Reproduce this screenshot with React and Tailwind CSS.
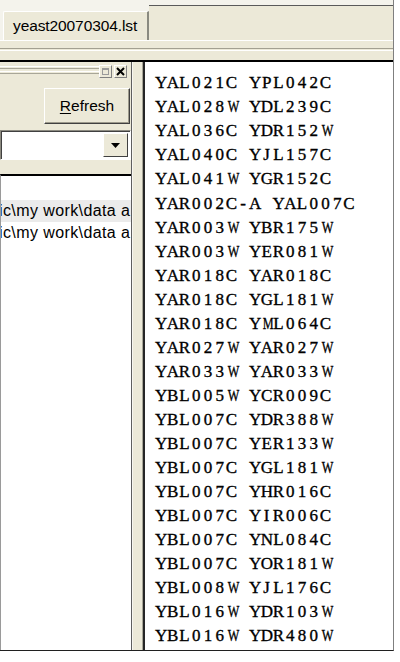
const pairs = [
  ['YAL021C', 'YPL042C'],
  ['YAL028W', 'YDL239C'],
  ['YAL036C', 'YDR152W'],
  ['YAL040C', 'YJL157C'],
  ['YAL041W', 'YGR152C'],
  ['YAR002C-A', 'YAL007C'],
  ['YAR003W', 'YBR175W'],
  ['YAR003W', 'YER081W'],
  ['YAR018C', 'YAR018C'],
  ['YAR018C', 'YGL181W'],
  ['YAR018C', 'YML064C'],
  ['YAR027W', 'YAR027W'],
  ['YAR033W', 'YAR033W'],
  ['YBL005W', 'YCR009C'],
  ['YBL007C', 'YDR388W'],
  ['YBL007C', 'YER133W'],
  ['YBL007C', 'YGL181W'],
  ['YBL007C', 'YHR016C'],
  ['YBL007C', 'YIR006C'],
  ['YBL007C', 'YNL084C'],
  ['YBL007C', 'YOR181W'],
  ['YBL008W', 'YJL176C'],
  ['YBL016W', 'YDR103W'],
  ['YBL016W', 'YDR480W'],
];

// paths are scrolled, only their tail end shows in the narrow panel
const files = ['ic\\my work\\data a', 'ic\\my work\\data a'];

function SmallButton({ children }) {
  return (
    <div className="w-[13px] h-[13px] flex items-center justify-center bg-[#ece9d8] border border-t-white border-l-white border-r-[#808080] border-b-[#808080]">
      {children}
    </div>
  );
}

// fixed-pitch cells so the serif face lines up like a terminal font;
// wide capitals are squeezed to fit their cell
function MonoLine({ text }) {
  return (
    <div className="h-[24.05px] flex items-center">
      {text.split('').map((ch, i) => (
        <span
          key={i}
          className={`inline-block w-[11.75px] text-center ${ch === 'W' || ch === 'M' ? 'scale-x-[0.72]' : ''}`}
        >
          {ch === ' ' ? '\u00a0' : ch}
        </span>
      ))}
    </div>
  );
}

export default function App() {
  return (
    <div className="w-[400px] h-[662px] bg-white overflow-hidden font-['Liberation_Sans',Arial,sans-serif] text-black">
      <div className="w-[394px] h-[651px] flex flex-col bg-[#ece9d8] border-r border-r-[#7f7f7f] border-b border-b-[#202020]">
        {/* document tabs */}
        <div className="h-[40px] flex shrink-0 bg-[#f4f3ec]">
          <div className="mt-[11px] ml-[3px] w-[146px] h-[29px] flex items-center pl-[9px] bg-[#ece9d8] border-l border-t border-l-white border-t-white border-r-2 border-r-[#8a8a80] rounded-tl-[2px] text-[15.5px] tracking-[-0.1px]">
            yeast20070304.lst
          </div>
          <div className="flex-1 mt-[5px] border-t border-t-[#5a5a5a] bg-[#ece9d8]" />
        </div>

        {/* toolbar separators */}
        <div className="h-[20px] shrink-0 flex flex-col border-t border-t-white">
          <div className="h-[7px]" />
          <div className="h-[3px] border-t border-t-[#a3a091] border-b border-b-white" />
          <div className="flex-1" />
        </div>

        <div className="flex-1 min-h-0 flex border-t-2 border-t-black">
          {/* left docked panel */}
          <div className="w-[132px] flex flex-col border-r border-r-[#5f5f5f]">
            <div className="h-[20px] shrink-0 flex items-start pt-[3px]">
              <div className="w-[99px] pt-[1px] flex flex-col gap-[2px]">
                <div className="h-[3px] border-t border-t-white border-b border-b-[#a8a698]" />
                <div className="h-[3px] border-t border-t-white border-b border-b-[#a8a698]" />
              </div>
              <SmallButton>
                <div className="w-[7px] h-[7px] border border-[#9a9a9a] border-t-2" />
              </SmallButton>
              <div className="w-[2px]" />
              <SmallButton>
                <svg width="9" height="9" viewBox="0 0 9 9">
                  <path d="M1 1 L8 8 M8 1 L1 8" stroke="#000" strokeWidth="2" />
                </svg>
              </SmallButton>
            </div>

            <div className="mt-[6px] ml-[44px] w-[86px] h-[36px] shrink-0 flex items-center justify-center bg-[#ece9d8] border border-t-white border-l-white border-r-[#404040] border-b-[#404040] shadow-[inset_-1px_-1px_0_#9d9a8c] text-[15.5px]">
              <span>
                <span className="underline underline-offset-2">R</span>efresh
              </span>
            </div>

            <div className="mt-[6px] h-[30px] shrink-0 flex items-center justify-end pr-[2px] bg-white border border-t-[#8c8a80] border-l-[#8c8a80] border-r-white border-b-white shadow-[inset_1px_1px_0_#404040]">
              <div className="w-[25px] h-[24px] flex items-center justify-center bg-[#ece9d8] border border-t-white border-l-white border-r-[#404040] border-b-[#404040]">
                <svg width="9" height="5" viewBox="0 0 9 5">
                  <path d="M0 0 H9 L4.5 5 Z" fill="#000" />
                </svg>
              </div>
            </div>

            <div className="mt-[14px] flex-1 min-h-0 flex flex-col bg-white border-t-2 border-t-black border-l border-l-[#9a9a9a] overflow-hidden">
              <div className="h-[24px] shrink-0" />
              {files.map((f, i) => (
                <div
                  key={i}
                  className={`h-[22px] flex items-center overflow-hidden whitespace-nowrap text-[16px] tracking-[0.4px] ${i === 0 ? 'bg-[#ebebeb]' : ''}`}
                >
                  <span className="-ml-[2px]">{f}</span>
                </div>
              ))}
            </div>
          </div>

          {/* splitter */}
          <div className="w-[11px] border-l border-l-[#f7f6f0] border-r border-r-[#a8a698]" />

          {/* pair list */}
          <div className="flex-1 bg-white border-l-2 border-l-[#262626] pl-[10px] pt-[9px] font-['Liberation_Serif','Times_New_Roman',serif] text-[17px] text-black [-webkit-text-stroke:0.35px_black] overflow-hidden">
            {pairs.map(([a, b], i) => (
              <MonoLine key={i} text={`${a} ${b}`} />
            ))}
          </div>
        </div>
      </div>
    </div>
  );
}
